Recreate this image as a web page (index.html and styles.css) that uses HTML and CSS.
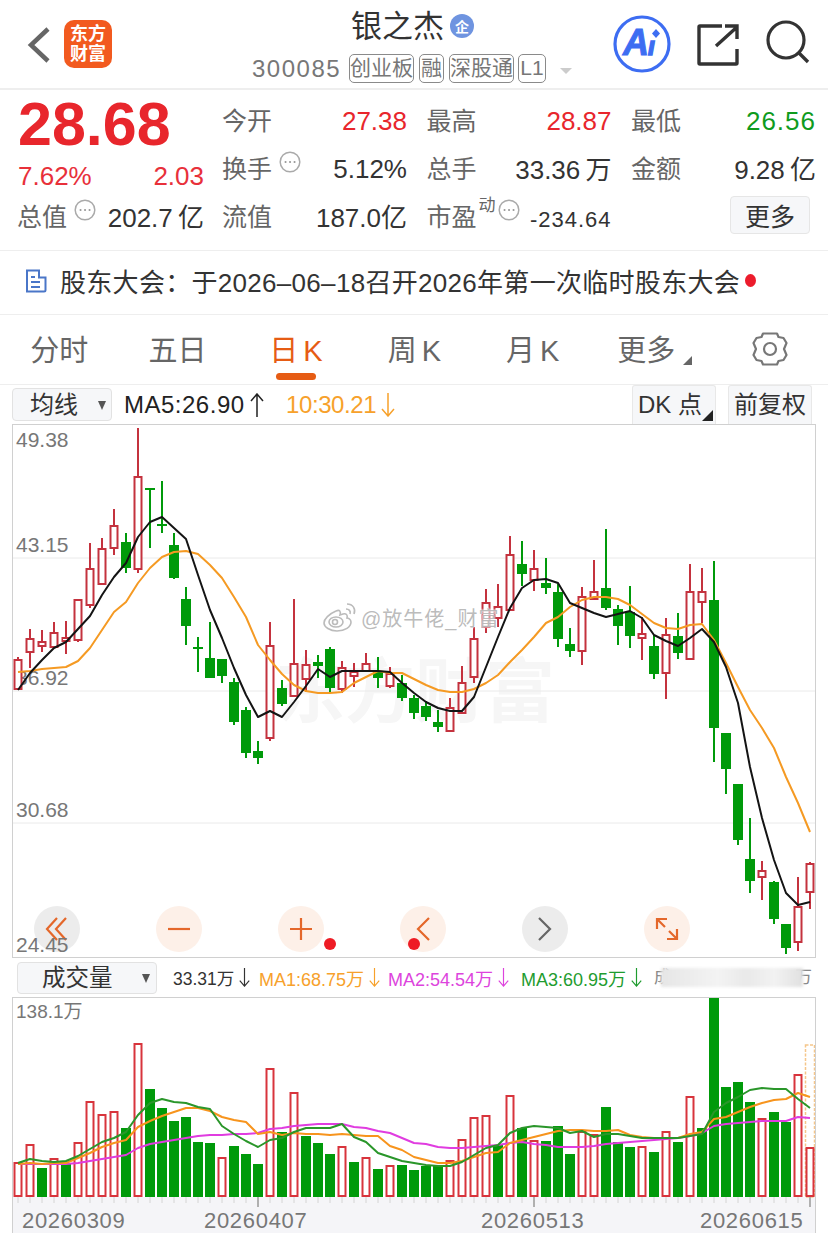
FILE: index.html
```html
<!DOCTYPE html>
<html lang="zh-CN">
<head>
    <meta charset="UTF-8">
    <meta name="viewport" content="width=device-width, initial-scale=1.0">
    <title>银之杰 300085</title>
    <link rel="stylesheet" href="styles.css">
</head>
<body>
    <!-- 上下箭头，工具栏里复用 -->
    <svg class="sprite" width="0" height="0">
        <symbol id="arrow-up" viewBox="0 0 14 24"><path d="M7 24V1M1 8l6-7 6 7" fill="none" stroke="currentColor" stroke-width="1.500"/></symbol>
        <symbol id="arrow-down" viewBox="0 0 14 24"><path d="M7 0v23M1 16l6 7 6-7" fill="none" stroke="currentColor" stroke-width="1.500"/></symbol>
    </svg>

    <!-- 顶部导航 -->
    <header class="topbar">
        <div class="nav-left">
            <svg class="back" width="24" height="38" viewBox="0 0 24 38"><path d="M21 3 4 19l17 16" fill="none" stroke="#666" stroke-width="4.500"/></svg>
            <div class="logo"><span>东方</span><span>财富</span></div>
        </div>
        <div class="nav-center">
            <div class="title-row">
                <h1>银之杰</h1>
                <span class="ent-badge">企</span>
            </div>
            <div class="code-row">
                <span class="code">300085</span>
                <span class="tag">创业板</span>
                <span class="tag tag-one">融</span>
                <span class="tag">深股通</span>
                <span class="tag tag-l1">L1</span>
                <span class="code-caret"></span>
            </div>
        </div>
        <div class="nav-right">
            <svg class="ai-icon" width="60" height="60" viewBox="0 0 60 60" font-family="Liberation Sans" font-weight="700" font-style="italic" fill="#3d6df2" stroke="#3d6df2">
                <circle cx="30" cy="30" r="27" fill="#fff" stroke-width="3.200"/>
                <text x="11" y="41" font-size="36" stroke-width="1">A</text>
                <text x="36" y="41" font-size="25" stroke-width="1.400">ı</text>
                <path d="m44 15 4 4.500-4 4.500-4-4.500z" stroke="none"/>
            </svg>
            <svg class="share-icon" width="44" height="44" viewBox="0 0 44 44">
                <path d="M26 4H4a1 1 0 0 0-1 1v36a1 1 0 0 0 1 1h36a1 1 0 0 0 1-1V27" fill="none" stroke="#333" stroke-width="3.400"/>
                <path d="M20 24 41 5M29 4h12v13" fill="none" stroke="#333" stroke-width="3.400"/>
            </svg>
            <svg class="search-icon" width="46" height="46" viewBox="0 0 46 46">
                <circle cx="21" cy="21" r="18" fill="none" stroke="#333" stroke-width="3.200"/>
                <path d="m34 34 9 9" stroke="#333" stroke-width="3.400"/>
            </svg>
        </div>
    </header>

    <!-- 行情数据 -->
    <section class="quote">
        <div class="quote-left">
            <div class="price">28.68</div>
            <div class="change"><span>7.62%</span><span>2.03</span></div>
            <div class="cap">
                <span class="label">总值<svg class="info" viewBox="0 0 22 22"><circle cx="11" cy="11" r="9.800"/><path d="M6.500 11h.1M11 11h.1M15.500 11h.1"/></svg></span>
                <span class="val val-cn">202.7&#8201;亿</span>
            </div>
        </div>
        <div class="quote-grid">
            <div class="cell"><span class="label">今开</span><span class="val red">27.38</span></div>
            <div class="cell"><span class="label">最高</span><span class="val red">28.87</span></div>
            <div class="cell"><span class="label">最低</span><span class="val green">26.56</span></div>
            <div class="cell"><span class="label">换手<svg class="info" viewBox="0 0 22 22"><circle cx="11" cy="11" r="9.800"/><path d="M6.500 11h.1M11 11h.1M15.500 11h.1"/></svg></span><span class="val">5.12%</span></div>
            <div class="cell"><span class="label">总手</span><span class="val val-cn">33.36&#8201;万</span></div>
            <div class="cell"><span class="label">金额</span><span class="val val-cn">9.28&#8201;亿</span></div>
            <div class="cell"><span class="label">流值</span><span class="val val-cn">187.0亿</span></div>
            <div class="cell"><span class="label">市盈<sup>动</sup><svg class="info info-pe" viewBox="0 0 22 22"><circle cx="11" cy="11" r="9.800"/><path d="M6.500 11h.1M11 11h.1M15.500 11h.1"/></svg></span><span class="val val-pe">-234.64</span></div>
            <div class="cell cell-end"><button class="more-btn">更多</button></div>
        </div>
    </section>

    <!-- 公告 -->
    <section class="notice">
        <svg width="22" height="24" viewBox="0 0 22 24" class="notice-icon">
            <path d="M2 1.500h12v7h6.500V21a1.500 1.500 0 0 1-1.500 1.500H2z" fill="none" stroke="#4a76c8" stroke-width="2"/>
            <path d="M6 8h4M6 13h9M6 18h9" stroke="#4a76c8" stroke-width="2"/>
        </svg>
        <span class="notice-text">股东大会：于2026–06–18召开2026年第一次临时股东大会</span>
        <span class="notice-dot"></span>
    </section>

    <!-- 周期切换 -->
    <nav class="tabs">
        <a>分时</a>
        <a>五日</a>
        <a class="active">日 K</a>
        <a>周 K</a>
        <a>月 K</a>
        <a class="tab-more">更多<i></i></a>
        <a class="tab-gear">
            <svg width="36" height="38" viewBox="0 0 36 38" fill="none" stroke="#777" stroke-width="2.200">
                <path d="M11 3.500h14l1.500 3.500 5 1 3 5-2.500 6 2.500 6-3 5-5 1-1.500 3.500H11L9.500 31l-5-1-3-5 2.500-6-2.500-6 3-5 5-1z" stroke-linejoin="round"/>
                <circle cx="18" cy="19" r="6"/>
            </svg>
        </a>
    </nav>

    <!-- K线工具栏 -->
    <div class="k-toolbar">
        <div class="select select-ma">均线<i></i></div>
        <span class="ma-text ma-five">MA5:26.90<svg class="arrow"><use href="#arrow-up"/></svg></span>
        <span class="ma-text ma-ten">10:30.21<svg class="arrow"><use href="#arrow-down"/></svg></span>
        <div class="tool-btn tool-dk">DK 点<i></i></div>
        <div class="tool-btn tool-fq">前复权</div>
    </div>

    <!-- K线图 -->
    <div class="chart chart-k">
        <div class="brand-mark">东方财富</div>
        <div class="controls">
            <span class="ctl ctl-grey">
                <svg width="24" height="26" viewBox="0 0 24 26" fill="none" stroke="#e4672a" stroke-width="2.200"><path d="M12 2 2 13l10 11M21 2 11 13l10 11"/></svg>
            </span>
            <span class="ctl">
                <svg width="24" height="4" viewBox="0 0 24 4"><path d="M1 2h22" stroke="#e4672a" stroke-width="2.200"/></svg>
            </span>
            <span class="ctl">
                <svg width="24" height="24" viewBox="0 0 24 24"><path d="M1 12h22M12 1v22" stroke="#e4672a" stroke-width="2.200"/></svg>
                <em class="dot dot-plus"></em>
            </span>
            <span class="ctl">
                <svg width="14" height="24" viewBox="0 0 14 24" fill="none" stroke="#e4672a" stroke-width="2.200"><path d="M13 1 2 12l11 11"/></svg>
                <em class="dot dot-prev"></em>
            </span>
            <span class="ctl ctl-grey">
                <svg width="14" height="24" viewBox="0 0 14 24" fill="none" stroke="#666" stroke-width="2.200"><path d="m1 1 11 11L1 23"/></svg>
            </span>
            <span class="ctl">
                <svg width="24" height="24" viewBox="0 0 24 24" fill="none" stroke="#e4672a" stroke-width="2.200"><path d="M2 12V2h10M2 2l8 8M22 12v10H12M22 22l-8-8"/></svg>
            </span>
        </div>
        <svg id="kline" class="chart-svg" width="802" height="532" viewBox="13 425 802 532"></svg>
        <div class="weibo-mark">
            <svg width="36" height="30" viewBox="0 0 36 30" fill="#fff" stroke="#bbb" stroke-width="1.600">
                <path d="M14 9C7 12 2 17 2 21c0 4 6 8 13 8 8 0 14-4 14-9 0-3-3-4-4-4 1-3-1-5-4-4l-3 1c1-3 0-6-4-4z"/>
                <ellipse cx="14" cy="20" rx="7" ry="5"/>
                <circle cx="13" cy="20" r="2.500"/>
                <path d="M24 7c3 0 5 2 4 5M25 2c6 0 9 5 7 10" fill="none"/>
            </svg>
            <span>@放牛佬_财富</span>
        </div>
    </div>

    <!-- 成交量工具栏 -->
    <div class="vol-toolbar">
        <div class="select select-vol">成交量<i></i></div>
        <span class="vol-text vol-now">33.31万<svg class="arrow"><use href="#arrow-down"/></svg></span>
        <span class="vol-text vol-ma1">MA1:68.75万<svg class="arrow"><use href="#arrow-down"/></svg></span>
        <span class="vol-text vol-ma2">MA2:54.54万<svg class="arrow"><use href="#arrow-down"/></svg></span>
        <span class="vol-text vol-ma3">MA3:60.95万<svg class="arrow"><use href="#arrow-down"/></svg></span>
        <div class="vol-hidden"><span class="vol-hidden-text">成</span><span class="vol-hidden-text">万</span><span class="vol-hidden-bar"></span></div>
    </div>

    <!-- 成交量图 -->
    <div class="chart chart-vol">
        <svg id="volume" class="chart-svg" width="802" height="235" viewBox="13 998 802 235"></svg>
    </div>

    <script src="chart.js"></script>
</body>
</html>
```

FILE: styles.css
```css
* {
    box-sizing: border-box;
}
html, body {
    margin: 0;
    padding: 0;
}
body {
    width: 828px;
    height: 1233px;
    overflow: hidden;
    background-color: #fff;
    color: #333;
    font-family: "Liberation Sans", "Noto Sans CJK SC", sans-serif;
}
.sprite {
    position: absolute;
}

/* 顶部导航 */
.topbar {
    display: flex;
    height: 90px;
    border-bottom: 2px solid #eee;
}
.nav-left {
    display: flex;
    align-items: flex-start;
    width: 252px;
    padding: 20px 0 0 27px;
}
.back {
    margin-top: 6px;
}
.logo {
    display: flex;
    flex-direction: column;
    align-items: center;
    justify-content: center;
    width: 48px;
    height: 48px;
    margin-left: 13px;
    border-radius: 10px;
    background-color: #f25a1f;
    color: #fff;
    font-size: 18px;
    font-weight: 700;
    line-height: 20px;
}
.nav-center {
    display: flex;
    flex-direction: column;
    width: 358px;
}
.title-row {
    display: flex;
    align-items: center;
    height: 50px;
    padding: 4px 0 0 99px;
}
.title-row h1 {
    margin: 0;
    font-size: 31px;
    font-weight: 400;
    line-height: 40px;
    color: #333;
}
.ent-badge {
    display: flex;
    align-items: center;
    justify-content: center;
    width: 24px;
    height: 24px;
    margin: -2px 0 0 6px;
    border-radius: 50%;
    background-color: #6f94e0;
    color: #fff;
    font-size: 14px;
    font-weight: 700;
}
.code-row {
    display: flex;
    align-items: center;
    height: 31px;
    margin-top: 3px;
}
.code {
    width: 97px;
    font-size: 24px;
    letter-spacing: 1.500px;
    color: #777;
}
.tag {
    height: 29px;
    margin-right: 5px;
    border: 1px solid #8a8a8a;
    border-radius: 5px;
    font-size: 21px;
    line-height: 25px;
    color: #777;
}
.tag-one {
    padding: 0 1px;
}
.tag-l1 {
    width: 28px;
    margin: 0 0 0 -1px;
    text-align: center;
}
.code-caret {
    width: 0;
    height: 0;
    margin: 4px 0 0 14px;
    border-top: 6px solid #ccc;
    border-left: 6px solid transparent;
    border-right: 6px solid transparent;
}
.nav-right {
    display: flex;
    align-items: flex-start;
}
.ai-icon {
    margin: 14px 0 0 2px;
}
.share-icon {
    margin: 22px 0 0 24px;
}
.search-icon {
    margin: 19px 0 0 25px;
}

/* 行情数据 */
.quote {
    display: flex;
    height: 161px;
    padding: 5px 0 0 18px;
    border-bottom: 1px solid #eee;
}
.quote-left {
    width: 186px;
    margin-right: 18px;
}
.price {
    font-size: 61px;
    font-weight: 700;
    line-height: 58px;
    color: #e8262c;
}
.change {
    display: flex;
    justify-content: space-between;
    font-size: 26px;
    line-height: 46px;
    color: #e8303a;
}
.cap {
    display: flex;
    justify-content: space-between;
    align-items: center;
    height: 32px;
    margin-left: -1px;
}
.quote-grid {
    display: grid;
    grid-template-columns: repeat(3, 185px);
    grid-auto-rows: 48px;
    column-gap: 19.500px;
}
.cell {
    display: flex;
    justify-content: space-between;
    align-items: center;
}
.cell-end {
    justify-content: flex-end;
}
.label {
    display: flex;
    align-items: center;
    font-size: 25px;
    color: #666;
}
.label sup {
    align-self: flex-start;
    margin: -1px 0 0 2px;
    font-size: 17px;
    line-height: 20px;
    vertical-align: baseline;
}
.val {
    margin-top: 4px;
    font-size: 26px;
    color: #333;
}
.val.val-cn {
    margin-top: 0;
}
.val.red {
    color: #e8262c;
}
.val.green {
    letter-spacing: 1px;
    color: #0f9b1e;
}
.val-pe {
    margin-top: 10px;
    font-size: 22px;
    letter-spacing: 1px;
}
.info {
    width: 22px;
    height: 22px;
    margin: -10px 0 0 7px;
    fill: none;
    stroke: #aaa;
    stroke-width: 1.500;
    stroke-linecap: round;
}
.info path {
    stroke: #999;
    stroke-width: 2;
}
.info-pe {
    margin: -10px 0 0 2px;
}
.more-btn {
    width: 80px;
    height: 38px;
    margin-right: 6px;
    padding: 0;
    border: 1px solid #e6e6e6;
    border-radius: 4px;
    background-color: #f6f7f9;
    color: #333;
    font-family: inherit;
    font-size: 25px;
}

/* 公告 */
.notice {
    display: flex;
    align-items: center;
    height: 64px;
    padding: 0 0 4px 25px;
    border-bottom: 1px solid #eee;
}
.notice-text {
    margin-left: 13px;
    font-size: 26px;
    letter-spacing: .3px;
    white-space: nowrap;
}
.notice-dot {
    width: 11px;
    height: 13px;
    margin: -1px 0 0 5px;
    border-radius: 50%;
    background-color: #ec1c2c;
}

/* 周期切换 */
.tabs {
    display: grid;
    grid-template-columns: repeat(7, 118.400px);
    height: 70px;
    border-bottom: 1px solid #eee;
}
.tabs a {
    position: relative;
    height: 69px;
    padding-top: 15px;
    text-align: center;
    font-size: 29px;
    line-height: 42px;
    word-spacing: -3px;
    color: #666;
}
.tabs .active {
    color: #e65c14;
}
.tabs .active::after {
    content: "";
    position: absolute;
    left: 39px;
    bottom: 4px;
    width: 40px;
    height: 7px;
    border-radius: 4px;
    background-color: #e65c14;
}
.tabs .tab-more {
    padding-right: 10px;
}
.tab-more i {
    position: absolute;
    left: 91px;
    top: 41px;
    border-bottom: 9px solid #666;
    border-left: 9px solid transparent;
}
.tabs .tab-gear {
    padding-top: 15px;
}

/* 工具栏 */
.k-toolbar {
    display: flex;
    align-items: center;
    height: 39px;
    padding-left: 12px;
}
.select {
    position: relative;
    border: 1px solid #e2e2e2;
    border-radius: 4px;
    background-color: #f6f7f9;
    color: #333;
}
.select i {
    position: absolute;
    top: 50%;
    margin-top: -4px;
    border-top: 9px solid #555;
    border-left: 4.500px solid transparent;
    border-right: 4.500px solid transparent;
}
.select-ma {
    width: 100px;
    height: 33px;
    padding-left: 17px;
    font-size: 24px;
    line-height: 31px;
}
.select-ma i {
    right: 5px;
}
.ma-text {
    display: flex;
    align-items: center;
    font-size: 24px;
    white-space: nowrap;
}
.ma-text .arrow {
    width: 14px;
    height: 24px;
    margin-left: 5px;
}
.ma-five {
    width: 162px;
    margin-left: 12px;
    letter-spacing: .5px;
    color: #222;
}
.ma-ten {
    letter-spacing: -.4px;
    color: #f7a12b;
}
.tool-btn {
    height: 39px;
    border: 1px solid #e8e8e8;
    border-bottom: 0;
    border-radius: 3px 3px 0 0;
    background-color: #f6f7f9;
    text-align: center;
    font-size: 24px;
    line-height: 38px;
    color: #333;
}
.tool-dk {
    position: relative;
    width: 84px;
    margin-left: auto;
    padding-right: 8px;
}
.tool-dk i {
    position: absolute;
    right: 2px;
    bottom: 3px;
    border-bottom: 11px solid #222;
    border-left: 11px solid transparent;
}
.tool-fq {
    width: 84px;
    margin: 0 16px 0 12px;
}

/* 图表区 */
.chart {
    position: relative;
    width: 804px;
    margin-left: 12px;
    border: 1px solid #d0d0d0;
}
.chart-k {
    height: 534px;
}
.chart-vol {
    height: 236px;
    border-bottom: 0;
}
.chart-svg {
    position: relative;
    display: block;
}
.brand-mark {
    position: absolute;
    left: 262px;
    top: 228px;
    font-size: 70px;
    font-weight: 700;
    line-height: 80px;
    color: #f6f6f6;
    white-space: nowrap;
}
.controls {
    position: absolute;
    left: 21px;
    top: 481px;
    display: flex;
    gap: 76px;
}
.ctl {
    position: relative;
    display: flex;
    align-items: center;
    justify-content: center;
    width: 46px;
    height: 46px;
    border-radius: 50%;
    background-color: #fdf0e8;
}
.ctl-grey {
    background-color: #ececec;
}
.dot {
    position: absolute;
    width: 12px;
    height: 12px;
    border-radius: 50%;
    background-color: #ee1c25;
}
.dot-plus {
    left: 46px;
    top: 32px;
}
.dot-prev {
    left: 8px;
    top: 32px;
}
.weibo-mark {
    position: absolute;
    left: 309px;
    top: 177px;
    display: flex;
    align-items: center;
    gap: 3px;
    font-size: 20px;
    letter-spacing: 1px;
    color: rgba(170, 170, 170, .8);
    text-shadow: 0 0 2px #fff, 0 0 2px #fff;
    white-space: nowrap;
}

/* 成交量工具栏 */
.vol-toolbar {
    display: flex;
    align-items: center;
    height: 39px;
    padding-left: 17px;
}
.select-vol {
    width: 140px;
    height: 32px;
    margin-right: 16px;
    padding-left: 24px;
    font-size: 23.500px;
    line-height: 30px;
}
.select-vol i {
    right: 6px;
}
.vol-text {
    display: flex;
    align-items: center;
    font-size: 18px;
    white-space: nowrap;
}
.vol-text .arrow {
    width: 11px;
    height: 19px;
    margin-left: 5px;
}
.vol-now {
    width: 86px;
    font-size: 17.500px;
    color: #333;
}
.vol-ma1 {
    width: 129px;
    color: #f7a12b;
}
.vol-ma2 {
    width: 133px;
    color: #dd44dd;
}
.vol-ma3 {
    width: 133px;
    color: #1f9c2f;
}
/* 被遮住的一段数值，只露出两端的文字 */
.vol-hidden {
    position: relative;
    display: flex;
    justify-content: space-between;
    width: 158px;
    height: 22px;
}
.vol-hidden-text {
    font-size: 17px;
    line-height: 22px;
    color: #888;
}
.vol-hidden-bar {
    position: absolute;
    left: 7px;
    top: 1px;
    width: 142px;
    height: 19px;
    background: linear-gradient(90deg, #e6e6e6, #f3f3f3 40%, #e9e9e9 60%, #f2f2f2 80%, #e0e0e0);
    filter: blur(1.500px);
}
```

FILE: chart.js
```js
// 日K数据：最高、实体上沿、实体下沿、最低（像素坐标），r 阳线 g 阴线
const candles = [
    [657,660,689,689,'r'],[629,639,652,668,'r'],[630,642,646,652,'r'],[622,633,647,647,'r'],
    [621,638,641,654,'r'],[600,600,640,642,'r'],[543,569,605,608,'r'],[538,549,584,584,'r'],
    [509,526,548,555,'r'],[533,542,568,573,'g'],[428,477,569,573,'r'],[488,488,489,548,'g'],
    [481,524,526,533,'g'],[533,545,578,579,'g'],[587,599,626,645,'g'],[637,647,649,672,'g'],
    [622,658,678,678,'g'],[659,659,676,683,'g'],[678,682,722,725,'g'],[707,710,753,758,'g'],
    [741,751,758,764,'g'],[622,646,738,741,'r'],[680,688,704,706,'g'],[599,664,696,696,'r'],
    [650,665,679,692,'r'],[655,662,666,678,'g'],[647,649,688,692,'g'],[661,668,689,693,'r'],
    [663,672,676,687,'r'],[653,664,671,671,'r'],[657,672,678,688,'g'],[667,674,686,688,'r'],
    [675,683,698,701,'g'],[695,698,713,719,'g'],[701,706,717,721,'g'],[710,722,727,732,'g'],
    [698,708,731,731,'r'],[666,683,713,713,'r'],[627,639,677,683,'r'],[589,603,627,633,'r'],
    [584,607,618,627,'r'],[536,555,610,610,'r'],[541,564,574,586,'g'],[550,569,580,591,'r'],
    [558,583,588,594,'g'],[584,592,639,647,'g'],[628,644,651,657,'g'],[587,597,651,665,'r'],
    [560,592,599,599,'r'],[529,588,608,610,'g'],[605,609,626,645,'g'],[586,612,636,648,'g'],
    [617,634,638,660,'r'],[635,646,674,679,'g'],[618,635,673,699,'r'],[613,636,653,659,'g'],
    [564,592,659,659,'r'],[568,592,602,623,'r'],[561,600,728,762,'g'],[733,733,769,794,'g'],
    [784,784,840,845,'g'],[818,859,881,893,'g'],[861,871,877,900,'r'],[881,882,919,924,'g'],
    [924,924,948,954,'g'],[877,907,942,951,'r'],[862,864,892,909,'r']
];

const ma5 = [690,673,660,648,642,629,616,595,577,563,537,522,517,528,539,575,610,638,668,695,717,711,717,702,686,669,677,671,671,671,671,672,683,693,702,708,711,711,697,667,637,608,588,580,579,583,603,608,613,617,614,611,618,635,641,646,638,629,642,667,703,767,818,860,893,905,902];
const ma10 = [672,671,669,668,667,661,648,630,612,602,583,568,557,552,551,554,565,578,597,617,645,660,674,685,691,693,693,692,683,677,671,673,673,679,685,690,692,692,689,683,675,662,650,637,623,617,607,600,597,597,599,605,614,623,628,629,625,624,640,663,687,710,728,748,777,803,832];

// 成交量柱顶部
const volumes = [
    [1163,'r'],[1145,'r'],[1168,'g'],[1159,'r'],[1163,'g'],[1143,'r'],[1102,'r'],[1115,'r'],[1112,'r'],[1128,'g'],
    [1044,'r'],[1089,'g'],[1108,'g'],[1121,'g'],[1117,'g'],[1142,'g'],[1143,'g'],[1158,'r'],[1146,'g'],[1154,'g'],
    [1164,'g'],[1069,'r'],[1132,'g'],[1093,'r'],[1136,'g'],[1143,'g'],[1154,'g'],[1147,'r'],[1162,'g'],[1158,'r'],
    [1169,'g'],[1166,'r'],[1165,'g'],[1170,'g'],[1166,'g'],[1166,'g'],[1161,'r'],[1140,'r'],[1118,'r'],[1116,'r'],
    [1145,'g'],[1096,'r'],[1128,'g'],[1141,'r'],[1141,'g'],[1126,'g'],[1154,'g'],[1132,'r'],[1135,'r'],[1107,'g'],
    [1142,'g'],[1147,'g'],[1147,'r'],[1152,'g'],[1132,'r'],[1142,'g'],[1097,'r'],[1128,'g'],[998,'g'],[1087,'g'],
    [1082,'g'],[1102,'g'],[1119,'r'],[1112,'g'],[1122,'g'],[1075,'r'],[1148,'r']
];

const volMa1 = [1164,1163,1164,1163,1163,1158,1153,1147,1143,1140,1127,1121,1116,1112,1108,1108,1111,1117,1120,1122,1134,1132,1135,1133,1134,1134,1135,1134,1135,1136,1136,1146,1150,1157,1160,1163,1163,1161,1157,1153,1152,1143,1140,1137,1134,1131,1130,1130,1131,1131,1130,1135,1137,1138,1138,1138,1134,1132,1119,1117,1112,1107,1103,1100,1099,1093,1097];
const volMa2 = [1164,1164,1164,1164,1164,1163,1161,1159,1157,1155,1148,1144,1142,1140,1138,1136,1135,1135,1134,1134,1133,1129,1128,1126,1125,1124,1124,1124,1127,1128,1131,1133,1138,1143,1144,1147,1148,1148,1147,1146,1145,1143,1142,1144,1145,1147,1147,1147,1146,1144,1143,1142,1141,1140,1139,1138,1136,1133,1126,1124,1123,1122,1121,1121,1121,1117,1118];
const volMa3 = [1163,1159,1161,1162,1161,1156,1149,1142,1138,1132,1115,1103,1099,1102,1103,1107,1109,1126,1134,1141,1147,1140,1138,1132,1128,1128,1128,1124,1137,1142,1153,1157,1161,1163,1165,1166,1166,1162,1155,1148,1145,1133,1128,1126,1127,1128,1133,1131,1137,1134,1134,1136,1138,1138,1138,1138,1136,1134,1112,1103,1097,1090,1088,1089,1089,1099,1108];

const SVG_NS = 'http://www.w3.org/2000/svg';
const RED_K = '#c4323e';
const GREEN_K = '#009a0a';
const RED_V = '#d8343c';
const LABEL_COLOR = '#777';

const xAt = i => 18 + i * 12;

function add(parent, tag, attrs, text) {
    const el = document.createElementNS(SVG_NS, tag);
    for (const key in attrs) {
        el.setAttribute(key, attrs[key]);
    }
    if (text) el.textContent = text;
    parent.appendChild(el);
    return el;
}

function drawLine(parent, values, color, width) {
    add(parent, 'polyline', {
        points: values.map((y, i) => xAt(i) + ',' + y).join(' '),
        fill: 'none',
        stroke: color,
        'stroke-width': width,
        'stroke-linejoin': 'round'
    });
}

function drawKline() {
    const svg = document.getElementById('kline');

    // 网格线
    [558, 691, 823].forEach(y => {
        add(svg, 'line', { x1: 13, x2: 815, y1: y, y2: y, stroke: '#eaeaea', 'stroke-width': 1 });
    });

    // 价格刻度
    [['49.38', 447], ['43.15', 552], ['36.92', 685], ['30.68', 817], ['24.45', 952]].forEach(([text, y]) => {
        add(svg, 'text', {
            x: 16, y: y, fill: LABEL_COLOR, 'font-size': 21,
            'font-family': 'Liberation Sans'
        }, text);
    });

    candles.forEach(([high, top, bottom, low, type], i) => {
        const x = xAt(i);
        const color = type === 'r' ? RED_K : GREEN_K;
        if (high < top) add(svg, 'line', { x1: x, x2: x, y1: high, y2: top, stroke: color, 'stroke-width': 2 });
        if (low > bottom) add(svg, 'line', { x1: x, x2: x, y1: bottom, y2: low, stroke: color, 'stroke-width': 2 });
        if (type === 'r') {
            add(svg, 'rect', { x: x - 3.5, y: top, width: 7, height: bottom - top, fill: '#fff', stroke: color, 'stroke-width': 2 });
        } else {
            add(svg, 'rect', { x: x - 5, y: top, width: 10, height: Math.max(bottom - top, 2), fill: color });
        }
    });

    drawLine(svg, ma10, '#f59a23', 2);
    drawLine(svg, ma5, '#141414', 2);
}

function drawVolume() {
    const svg = document.getElementById('volume');
    const base = 1197;

    // 日期轴底色
    add(svg, 'rect', { x: 13, y: base, width: 802, height: 36, fill: '#f5f5f8' });

    add(svg, 'text', {
        x: 16, y: 1018, fill: LABEL_COLOR, 'font-size': 19,
        'font-family': 'Liberation Sans, Noto Sans CJK SC'
    }, '138.1万');

    // 最新一根的量能预估框
    add(svg, 'rect', {
        x: 805.5, y: 1045, width: 9, height: base - 1045, fill: 'none',
        stroke: '#f5c68a', 'stroke-width': 1.5, 'stroke-dasharray': '3 1.5'
    });

    volumes.forEach(([top, type], i) => {
        const x = xAt(i);
        if (type === 'r') {
            add(svg, 'rect', { x: x - 3.5, y: top, width: 7, height: base - top - 1, fill: '#fff', stroke: RED_V, 'stroke-width': 2 });
        } else {
            add(svg, 'rect', { x: x - 5, y: top, width: 10, height: base - top, fill: GREEN_K });
        }
        const major = i === 20 || i === 43 || i === 66;
        add(svg, 'line', {
            x1: x, x2: x, y1: base, y2: base + (major ? 10 : 6),
            stroke: major ? '#999' : '#d4d4d4', 'stroke-width': major ? 1.5 : 1
        });
    });

    drawLine(svg, volMa2, '#e03ce0', 2);
    drawLine(svg, volMa1, '#f7941d', 2);
    drawLine(svg, volMa3, '#2a962a', 2);

    [['20260309', 22], ['20260407', 204], ['20260513', 481], ['20260615', 700]].forEach(([text, x]) => {
        add(svg, 'text', {
            x: x, y: 1228, fill: LABEL_COLOR, 'font-size': 22,
            'letter-spacing': 0.7, 'font-family': 'Liberation Sans'
        }, text);
    });
}

drawKline();
drawVolume();
```
